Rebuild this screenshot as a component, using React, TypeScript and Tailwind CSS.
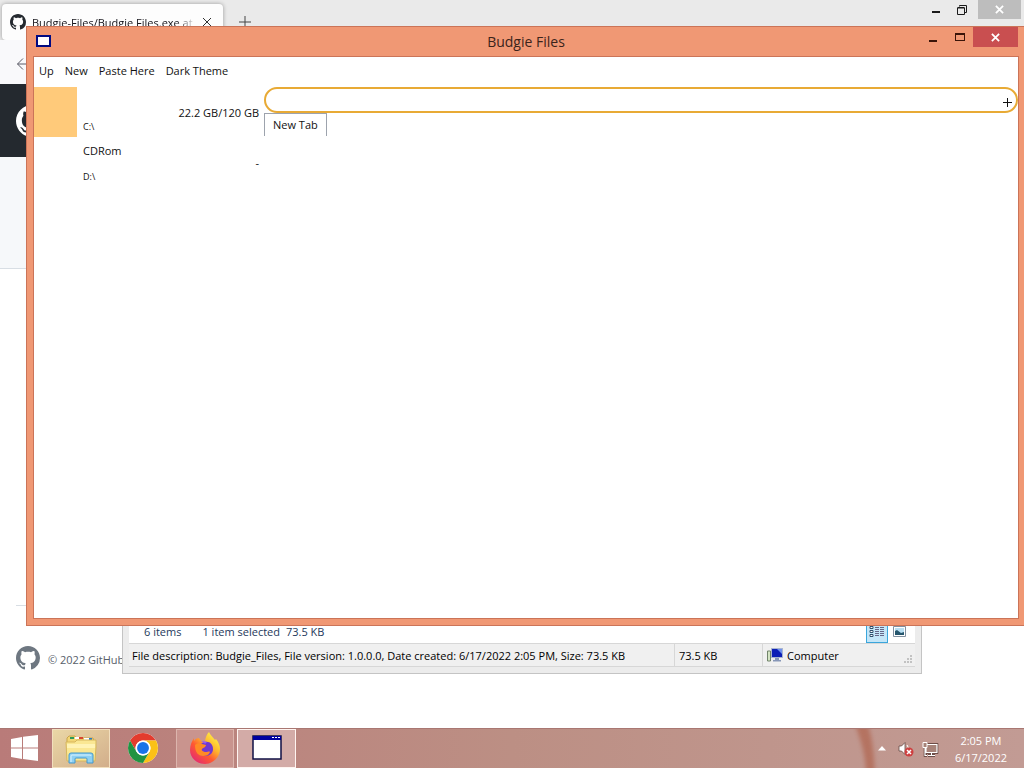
import { useId } from 'react';

const menuItems = ['Up', 'New', 'Paste Here', 'Dark Theme'];

const drives = [
  { name: '', path: 'C:\\', usage: '22.2 GB/120 GB', used: 22.2, total: 120 },
  { name: 'CDRom', path: 'D:\\', usage: '-', used: 0, total: 1 },
];

function GithubMark({ className }: { className?: string }) {
  return (
    <svg viewBox="0 0 16 16" className={className} fill="currentColor">
      <path d="M8 0C3.58 0 0 3.58 0 8c0 3.54 2.29 6.53 5.47 7.59.4.07.55-.17.55-.38 0-.19-.01-.82-.01-1.49-2.01.37-2.53-.49-2.69-.94-.09-.23-.48-.94-.82-1.13-.28-.15-.68-.52-.01-.53.63-.01 1.08.58 1.23.82.72 1.21 1.87.87 2.33.66.07-.52.28-.87.51-1.07-1.78-.2-3.64-.89-3.64-3.95 0-.87.31-1.59.82-2.15-.08-.2-.36-1.02.08-2.12 0 0 .67-.21 2.2.82.64-.18 1.32-.27 2-.27s1.36.09 2 .27c1.53-1.04 2.2-.82 2.2-.82.44 1.1.16 1.92.08 2.12.51.56.82 1.27.82 2.15 0 3.07-1.87 3.75-3.65 3.95.29.25.54.73.54 1.48 0 1.07-.01 1.93-.01 2.2 0 .21.15.46.55.38A8.01 8.01 0 0 0 16 8c0-4.42-3.58-8-8-8z" />
    </svg>
  );
}

function CloseGlyph({ className }: { className?: string }) {
  return (
    <svg viewBox="0 0 10 10" className={className} fill="none" stroke="currentColor">
      <path d="M1 1l8 8M9 1L1 9" />
    </svg>
  );
}

function BrowserWindow() {
  return (
    <section className="absolute inset-0 flex flex-col bg-white">
      {/* Tab strip */}
      <div className="flex h-10 shrink-0 items-start justify-between bg-[#eaeaea]">
        <div className="flex items-center pt-1 pl-[2px]">
          <div className="flex h-9 w-[221px] items-center gap-[6px] rounded bg-[#fdfdfd] pr-[11px] pl-2 shadow-[0_0_4px_rgba(0,0,0,0.35)]">
            <GithubMark className="h-4 w-4 shrink-0 text-[#24292f]" />
            <span className="flex-1 pt-[2px] text-[11px] whitespace-nowrap text-[#15141a] [mask-image:linear-gradient(to_right,black_88%,transparent)]">
              Budgie-Files/Budgie Files.exe at
            </span>
            <button aria-label="Close tab" className="shrink-0">
              <CloseGlyph className="h-[10px] w-[10px] text-[#333]" />
            </button>
          </div>
          <button aria-label="New tab" className="ml-4 text-[#444]">
            <svg viewBox="0 0 12 12" className="h-3 w-3" fill="none" stroke="currentColor">
              <path d="M6 0v12M0 6h12" />
            </svg>
          </button>
        </div>
        <div className="flex items-start pr-[3px]">
          <button aria-label="Minimize browser" className="flex h-5 w-[26px] items-center justify-center pt-1">
            <span className="h-[2px] w-2 bg-[#1a1a1a]" />
          </button>
          <button aria-label="Restore browser" className="flex h-5 w-[26px] items-center justify-center">
            <svg viewBox="0 0 10 10" className="h-[10px] w-[10px]" fill="none" stroke="#1a1a1a">
              <path d="M.5 3h7v6.500h-7zM.5 2.500h7M2.500 1.500V.5h7v7H8" />
            </svg>
          </button>
          <button aria-label="Close browser" className="ml-[3px] flex h-[19px] w-[43px] items-center justify-center bg-[#bdbdbd] text-white">
            <CloseGlyph className="h-[9px] w-[9px] stroke-2" />
          </button>
        </div>
      </div>
      <div className="flex h-[44px] shrink-0 items-center bg-[#f9f9fb] pt-1 pl-4">
        <button aria-label="Back">
          <svg viewBox="0 0 14 14" className="h-[14px] w-[14px]" fill="none" stroke="#5b5b66">
            <path d="M14 7H1.500M7 1.500L1.500 7 7 12.500" />
          </svg>
        </button>
      </div>
      {/* Page */}
      <div className="flex h-[73px] shrink-0 items-center bg-[#24292f] pl-4">
        <GithubMark className="h-8 w-8 text-white" />
      </div>
      <div className="h-28 shrink-0 border-b border-[#d8dee4] bg-[#f6f8fa]" />
      <div className="flex-1" />
      <footer className="mx-4 flex h-[123px] items-start gap-2 border-t border-[#d8dee4] pt-10">
        <GithubMark className="h-6 w-6 text-[#6e7781]" />
        <span className="pt-[2px] text-[11px] leading-6 text-[#57606a]">© 2022 GitHub</span>
      </footer>
    </section>
  );
}

function ExplorerWindow() {
  return (
    <section className="absolute top-20 right-[102px] bottom-[54px] left-[122px] flex flex-col justify-end border border-[#c4c4c4] bg-[#ececec] px-[6px] pb-[6px] text-[11px]">
      <div className="flex h-6 shrink-0 items-center bg-white pr-[5px] pl-[15px] text-[#1e395b]">
        <span className="pt-[2px]">6 items</span>
        <span className="ml-[21px] pt-[2px]">1 item selected</span>
        <span className="ml-[6px] pt-[2px]">73.5 KB</span>
        <button aria-label="Details view" className="ml-auto flex h-6 w-[22px] items-center justify-center border border-[#3aa6dc] bg-[#c4e6f8]">
          <svg viewBox="0 0 16 13" className="h-[13px] w-4" fill="none" stroke="#31506d">
            <path d="M1 1.500h3v2H1zM1 5.500h3v2H1zM1 9.500h3v2H1z" fill="#fff" />
            <path d="M6 2.500h4M11 2.500h4M6 4.500h4M11 4.500h4M6 6.500h4M11 6.500h4M6 8.500h4M11 8.500h4M6 10.500h4M11 10.500h4" stroke="#668" />
          </svg>
        </button>
        <button aria-label="Large icons view" className="flex h-6 w-[22px] items-center justify-center">
          <svg viewBox="0 0 13 11" className="h-[11px] w-[13px]">
            <path d="M.5.5h12v10H.5z" fill="#fff" stroke="#8190a0" />
            <path d="M2 2h9v7H2z" fill="#b9dff3" />
            <path d="M2 5l2-1 4 3 3-1v3H2z" fill="#25566d" />
          </svg>
        </button>
      </div>
      <div className="flex h-6 shrink-0 items-center border-y border-[#d7d7d7] bg-[#f0f0f0] text-black">
        <span className="w-[546px] truncate border-r border-[#d7d7d7] pt-[2px] pl-[3px] leading-5">
          File description: Budgie_Files, File version: 1.0.0.0, Date created: 6/17/2022 2:05 PM, Size: 73.5 KB
        </span>
        <span className="w-[88px] border-r border-[#d7d7d7] pt-[2px] pl-1 leading-5">73.5 KB</span>
        <svg viewBox="0 0 16 16" className="ml-1 h-4 w-4">
          <path d="M.5 4h3v10h-3z" fill="#d4e4c4" stroke="#71836a" />
          <path d="M4.500 1.500h11v9h-11z" fill="#0d1fb5" stroke="#a9b5cf" />
          <path d="M10 2h5v5z" fill="#6f91ee" />
          <path d="M8 11h4v2h2v1.500H6V13h2z" fill="#8797b8" />
        </svg>
        <span className="ml-1 pt-[2px]">Computer</span>
        <svg viewBox="0 0 9 9" className="mt-2 mr-[2px] ml-auto h-[9px] w-[9px]" fill="#c2c2c2">
          <path d="M6 0h2v2H6zM3 3h2v2H3zM6 3h2v2H6zM0 6h2v2H0zM3 6h2v2H3zM6 6h2v2H6z" />
        </svg>
      </div>
    </section>
  );
}

function DriveRow({ drive }: { drive: (typeof drives)[number] }) {
  return (
    <li className="relative flex h-[50px] items-center justify-between pr-[5px] pl-[49px]">
      <div
        className="absolute inset-y-0 left-0 bg-[#ffca7a]"
        style={{ width: `${(drive.used / drive.total) * 100}%` }}
      />
      <div className="flex h-full flex-col justify-between pt-1 pb-[2px]">
        <span className="h-5 leading-5">{drive.name}</span>
        <span className="text-[9px] leading-4">{drive.path}</span>
      </div>
      <span className="pt-[2px]">{drive.usage}</span>
    </li>
  );
}

function BudgieFilesWindow() {
  return (
    <section className="absolute top-[26px] -right-[2px] bottom-[102px] left-[26px] flex flex-col border border-[#cb7458] bg-[#f09874] px-[7px] pb-[7px] text-[#111]">
      <header className="flex h-[30px] shrink-0 items-start">
        <div className="flex w-[135px] items-center pt-2 pl-[2px]">
          <svg viewBox="0 0 15 12" className="h-3 w-[15px]">
            <path d="M1 1h13v10H1z" fill="#fff" stroke="#000a82" strokeWidth="2" />
          </svg>
        </div>
        <h1 className="flex-1 text-center text-sm leading-[29px] text-[#3b241b]">Budgie Files</h1>
        <div className="flex w-[135px] justify-end">
          <button aria-label="Minimize" className="flex h-5 w-[27px] items-center justify-center pt-[7px]">
            <span className="h-[2px] w-2 bg-[#3a1409]" />
          </button>
          <button aria-label="Maximize" className="flex h-5 w-[27px] items-center justify-center">
            <span className="h-2 w-[10px] border border-t-2 border-[#3a1409]" />
          </button>
          <button aria-label="Close" className="flex h-5 w-[45px] items-center justify-center bg-[#c94f50] text-white">
            <CloseGlyph className="h-[9px] w-[9px] stroke-2" />
          </button>
        </div>
      </header>
      <div className="flex flex-1 flex-col bg-white text-[11px] outline outline-[#cb7458]">
        <nav className="flex h-[30px] shrink-0 items-start gap-[11px] pl-[5px] leading-7">
          {menuItems.map((item) => (
            <button key={item}>{item}</button>
          ))}
        </nav>
        <div className="flex flex-1">
          <ul className="w-[230px] shrink-0">
            {drives.map((drive) => (
              <DriveRow key={drive.path} drive={drive} />
            ))}
          </ul>
          <main className="flex-1">
            <div className="flex h-[26px] items-center rounded-full border-2 border-[#e8aa35] pr-[3px] pl-3">
              <input aria-label="Path" className="min-w-0 flex-1 bg-transparent outline-none" />
              <button aria-label="Add tab" className="flex h-4 w-3 items-center justify-center pt-1">
                <svg viewBox="0 0 9 9" className="h-[9px] w-[9px]" fill="none" stroke="#111">
                  <path d="M4.500 0v9M0 4.500h9" />
                </svg>
              </button>
            </div>
            <button className="block h-[23px] border-x border-t border-[#9da3ad] px-2 leading-[22px]">New Tab</button>
          </main>
        </div>
      </div>
    </section>
  );
}

function WindowsLogo() {
  return (
    <svg viewBox="0 0 27 26" className="h-[26px] w-[27px]" fill="#fff">
      <path d="M0 4l11-2v10.500H0zM12 1.800L27 0v12.500H12zM0 13.500h11V24L0 22zM12 13.500h15V26l-15-2z" />
    </svg>
  );
}

function FolderIcon() {
  return (
    <svg viewBox="0 0 32 30" className="h-[30px] w-8">
      <path d="M2 4l2-2h6l1 2h17l1 3v5H2z" fill="#f3d675" stroke="#c9a54b" />
      <path d="M5 3h4v2H5z" fill="#2c9b58" />
      <path d="M14 3h4v2h-4z" fill="#d8472f" />
      <path d="M10 3h4v2h-4zM19 4h5v2h-5z" fill="#fff" />
      <path d="M24 4h3v2h-3z" fill="#2a7ec2" />
      <path d="M1 8h9l2-2h19v7l-1 14H2z" fill="#fae793" stroke="#d6b65c" />
      <path d="M2 10h28v4H2z" fill="#fff3b6" />
      <path d="M4 29v-8q0-2 2-2h20q2 0 2 2v8h-6v-4q0-1-1-1H11q-1 0-1 1v4z" fill="#8ed0f2" stroke="#4598cc" />
      <path d="M6 28v-6q0-1 1-1h18q1 0 1 1" fill="none" stroke="#d9f3ff" />
    </svg>
  );
}

function ChromeIcon() {
  return (
    <svg viewBox="0 0 48 48" className="h-[30px] w-[30px]">
      <circle cx="24" cy="24" r="24" fill="#fff" />
      <path d="M3.220 12A24 24 0 0 1 44.780 12H24a12 12 0 0 0-10.390 18z" fill="#e33b2e" />
      <path d="M44.780 12A24 24 0 0 1 24 48l10.390-18A12 12 0 0 0 24 12z" fill="#fbc116" />
      <path d="M24 48A24 24 0 0 1 3.220 12l10.390 18a12 12 0 0 0 20.780 0z" fill="#229342" />
      <circle cx="24" cy="24" r="12" fill="#fff" />
      <circle cx="24" cy="24" r="9.500" fill="#1a73e8" />
    </svg>
  );
}

function FirefoxIcon() {
  const id = useId();
  return (
    <svg viewBox="0 0 32 32" className="h-8 w-8">
      <defs>
        <linearGradient id={id} x1="0.850" y1="0.100" x2="0.200" y2="0.900">
          <stop offset="0" stopColor="#fff044" />
          <stop offset="0.350" stopColor="#ffb52d" />
          <stop offset="0.650" stopColor="#ff5a30" />
          <stop offset="1" stopColor="#e8306a" />
        </linearGradient>
      </defs>
      <path
        d="M20 0c1 3 4 5 6 8l1-1c3 4 4 7 4 10 0 8-7 15-15 15S1 26 1 18c0-5 2-9 4-12v3c1-2 3-3 5-3 1 2 2 3 3 3l3 1c0-4 2-8 4-10z"
        fill={`url(#${id})`}
      />
      <path d="M16 10c5-1 8 3 8 7 0 4-3 7-8 7-4 0-7-2-7-6s3-7 7-8z" fill="#7139cf" />
      <path d="M18 10c-2-1-5-1-6 0 3 0 4 2 4 2z" fill="#9059ff" />
      <path d="M6 13c2-2 5-2 7-1l4 1c0 2-3 3-4 4s1 3 4 3c2 0 3-1 4 0-1 3-4 4-7 4-5 0-8-4-8-11z" fill="#ff8a25" />
    </svg>
  );
}

function AppWindowIcon() {
  return (
    <svg viewBox="0 0 30 26" className="h-[26px] w-[30px]">
      <path d="M1 1h28v23H1z" fill="#fff" stroke="#111145" strokeWidth="1.500" />
      <path d="M1 1h28v4H1z" fill="#0000a0" />
      <path d="M20 2h2v1h-2zM23 2h2v1h-2zM26 2h2v1h-2z" fill="#fff" />
    </svg>
  );
}

function Taskbar() {
  return (
    <footer className="relative flex h-10 shrink-0 items-center justify-between overflow-hidden border-t border-[#a97772] bg-linear-to-r from-[#b97b79] via-[#bc8f84] to-[#c29b94]">
      <svg viewBox="0 0 40 40" className="absolute inset-y-0 right-[136px] h-full w-10">
        <path d="M7 -4h13c4 12 6 26 7 48H18C17 28 14 15 7 -4z" fill="#b0644e" opacity="0.700" className="blur-[2px]" />
      </svg>
      <div className="relative flex h-full items-center">
        <button aria-label="Start" className="flex h-full w-[52px] items-center pb-[2px] pl-[11px]">
          <WindowsLogo />
        </button>
        <button aria-label="File Explorer" className="flex h-[39px] w-[58px] items-center justify-center border border-[#f2dfbe] bg-linear-to-br from-[#ead7a6] to-[#d2ae8b]">
          <FolderIcon />
        </button>
        <button aria-label="Google Chrome" className="flex h-full w-[66px] items-center justify-center pb-[2px]">
          <ChromeIcon />
        </button>
        <button aria-label="Firefox" className="flex h-[39px] w-[58px] items-center justify-center border border-[#dcb5ad] bg-[#c9948e] pb-[2px]">
          <FirefoxIcon />
        </button>
        <button aria-label="Budgie Files" className="ml-[3px] flex h-[39px] w-[59px] items-center justify-center border border-[#fff4f0] bg-[#d3aba7] pb-[2px]">
          <AppWindowIcon />
        </button>
      </div>
      <div className="relative flex items-center pr-[17px] text-white">
        <button aria-label="Show hidden icons" className="mr-3">
          <svg viewBox="0 0 8 5" className="h-[5px] w-2" fill="#fff">
            <path d="M4 0l4 4.500H0z" />
          </svg>
        </button>
        <button aria-label="Volume muted" className="mr-2">
          <svg viewBox="0 0 16 16" className="h-4 w-4">
            <path d="M1 5h2.500L7 1.500v12L3.500 10H1z" fill="#fff" stroke="#654a44" strokeWidth="0.800" />
            <path d="M9 4q2 2 1 6" fill="none" stroke="#fff" />
            <circle cx="11" cy="11" r="4.500" fill="#ce3f3f" />
            <path d="M9 9l4 4M13 9l-4 4" stroke="#fff" strokeWidth="1.500" />
          </svg>
        </button>
        <button aria-label="Network" className="mr-4">
          <svg viewBox="0 0 17 16" className="h-4 w-[17px]" fill="none">
            <path d="M4 3.500h11v8H4zM9.500 12v2.500M6 14.500h7M3 7v7.500h2" stroke="#51342f" strokeWidth="2.500" />
            <path d="M4 3.500h11v8H4z" fill="#a78379" />
            <path d="M4 3.500h11v8H4zM9.500 12v2.500M6 14.500h7M3 7v7.500h2" stroke="#fff" strokeWidth="1.200" />
            <path d="M1 1.500h4v5H1z" fill="#a78379" stroke="#fff" />
          </svg>
        </button>
        <time className="flex flex-col items-center text-[11px] leading-[17px]">
          <span>2:05 PM</span>
          <span>6/17/2022</span>
        </time>
      </div>
    </footer>
  );
}

export default function App() {
  return (
    <div className="flex h-screen flex-col overflow-hidden font-['Open_Sans','Noto_Sans',sans-serif]">
      <div className="relative flex-1 overflow-hidden">
        <BrowserWindow />
        <ExplorerWindow />
        <BudgieFilesWindow />
      </div>
      <Taskbar />
    </div>
  );
}
